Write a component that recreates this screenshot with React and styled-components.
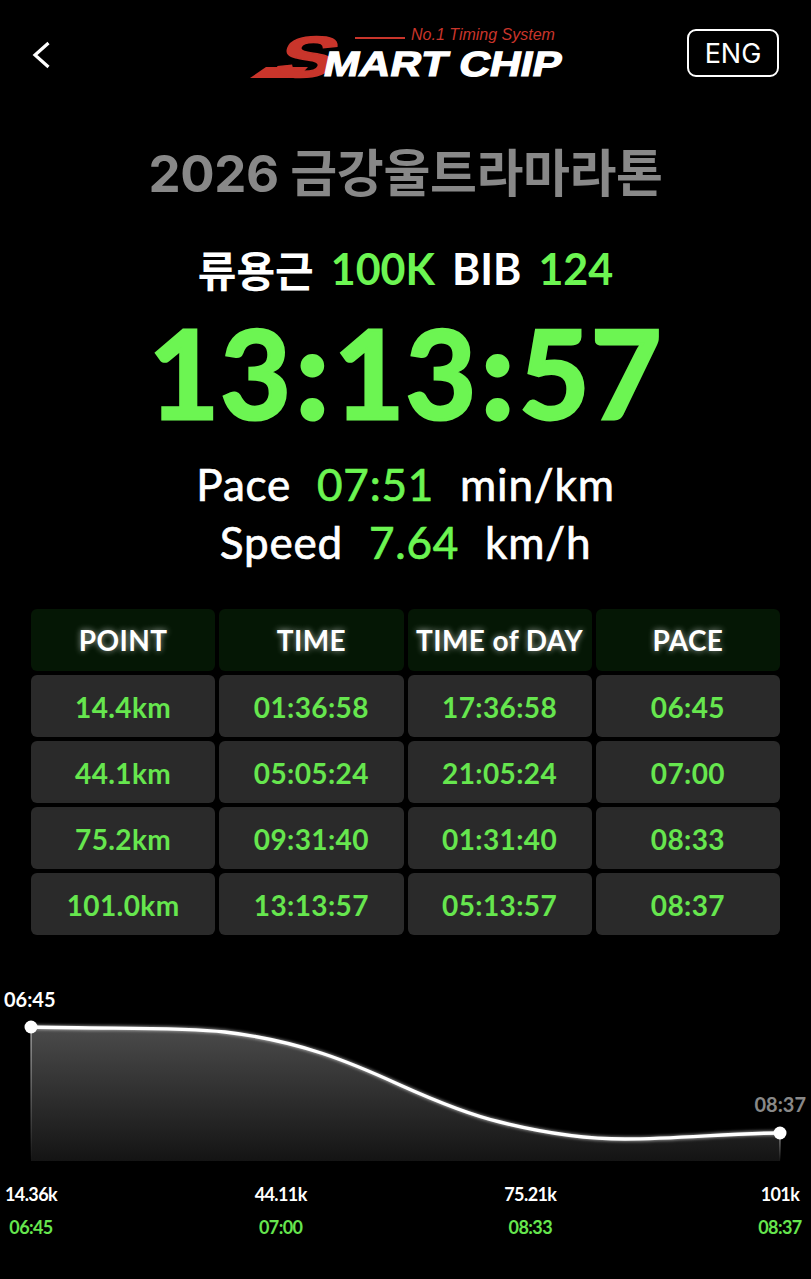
import React from 'react'
import styled, { createGlobalStyle } from 'styled-components'

const GREEN = '#6cf552'
const SOFT_GREEN = '#66e64e'
const KO = '"Lato", "Noto Sans CJK KR", sans-serif'

const GlobalStyle = createGlobalStyle`
  html, body {
    margin: 0;
    background: #000;
  }
  body {
    font-family: ${KO};
    color: #fff;
  }
`

const Page = styled.div`
  width: 811px;
  height: 1279px;
  overflow: hidden;
  background: #000;
`

const Header = styled.header`
  height: 106px;
  padding: 29px 32px 0 32px;
  box-sizing: border-box;
  display: flex;
  justify-content: space-between;
  align-items: flex-start;
`

const BackButton = styled.div`
  width: 19px;
  height: 52px;
  display: flex;
  align-items: center;
`

const LogoWrap = styled.div`
  width: 320px;
  height: 60px;
  margin: -5px 0 0 78px;
`

const LangButton = styled.div`
  width: 92px;
  height: 48px;
  box-sizing: border-box;
  border: 2px solid #fff;
  border-radius: 9px;
  display: flex;
  align-items: center;
  justify-content: center;
  font-family: "Inter", sans-serif;
  font-size: 27px;
  font-weight: 400;
`

const Title = styled.h1`
  margin: 34px 0 0;
  text-align: center;
  color: #888;
  font-family: "Inter", "Noto Sans CJK KR", sans-serif;
  font-size: 51px;
  line-height: 68px;
  font-weight: 700;
  letter-spacing: -0.4px;
`

const NameLine = styled.div`
  margin-top: 35px;
  display: flex;
  justify-content: center;
  gap: 17px;
  font-size: 43px;
  line-height: 52px;
  font-weight: 700;
`

const NameText = styled.span`
  font-family: "Noto Sans CJK KR", sans-serif;
  font-size: 42px;
  font-weight: 700;
`

const Green = styled.span`
  color: ${GREEN};
`

const BigTime = styled.div`
  margin-top: 17px;
  text-align: center;
  color: ${GREEN};
  font-size: 122px;
  line-height: 120px;
  font-weight: 700;
  letter-spacing: 1px;
  -webkit-text-stroke: 3px currentColor;
`

const Colon = styled.span`
  font-family: "Inter", sans-serif;
`

const StatLine = styled.div`
  display: flex;
  justify-content: center;
  gap: 26px;
  font-size: 44px;
  line-height: 58px;
  letter-spacing: 0.8px;
  -webkit-text-stroke: 0.7px currentColor;
  margin-top: ${p => p.$top || 0}px;
`

const Table = styled.div`
  margin: 38px 31px 0;
  display: grid;
  grid-template-columns: repeat(4, 1fr);
  grid-auto-rows: 62px;
  gap: 4px;
`

const Cell = styled.div`
  background: ${p => (p.$head ? '#051705' : '#2a2a2a')};
  color: ${p => (p.$head ? '#fff' : SOFT_GREEN)};
  text-shadow: ${p => (p.$head ? '0 0 6px rgba(255,255,255,0.6)' : 'none')};
  padding-top: ${p => (p.$head ? 0 : 2)}px;
  box-sizing: border-box;
  border-radius: 6px;
  display: flex;
  align-items: center;
  justify-content: center;
  font-size: 28px;
  font-weight: 700;
  letter-spacing: 0.4px;
  white-space: nowrap;
`

const Chart = styled.svg`
  display: block;
  margin-top: 20px;
`

const ChartLabel = styled.text`
  font-family: "Lato", sans-serif;
  font-size: 20px;
  font-weight: 700;
  fill: ${p => p.$fill};
  text-anchor: ${p => p.$anchor};
`

const AxisRow = styled.div`
  margin-top: 17px;
  display: flex;
  justify-content: space-between;
`

const AxisItem = styled.div`
  width: 62px;
  display: flex;
  flex-direction: column;
  align-items: center;
  gap: 12px;
  font-size: 18px;
  line-height: 21px;
  font-weight: 700;
  letter-spacing: -0.6px;
`

const AxisPace = styled.span`
  color: ${SOFT_GREEN};
`

function Logo() {
  return (
    <svg width="320" height="60" viewBox="0 0 320 60" style={{ overflow: 'visible' }}>
      <polygon points="2,54 18,43 60,43 50,54" fill="#c9352b" />
      <text transform="translate(24,53) scale(1.5,1) skewX(-14)" fontFamily="Liberation Sans" fontWeight="700" fontSize="58" fill="#c9352b" stroke="#c9352b" strokeWidth="1.5">S</text>
      <text transform="translate(74,52) scale(1.22,1) skewX(-10)" fontFamily="Liberation Sans" fontWeight="700" fontSize="35" fill="#fff" stroke="#fff" strokeWidth="1.2">MART CHIP</text>
      <rect x="107" y="13" width="50" height="2" fill="#c9352b" />
      <text x="163" y="16" fontFamily="Liberation Sans" fontStyle="italic" fontSize="16" fill="#c9352b">No.1 Timing System</text>
    </svg>
  )
}

const rows = [
  ['14.4km', '01:36:58', '17:36:58', '06:45'],
  ['44.1km', '05:05:24', '21:05:24', '07:00'],
  ['75.2km', '09:31:40', '01:31:40', '08:33'],
  ['101.0km', '13:13:57', '05:13:57', '08:37'],
]

const axis = [
  ['14.36k', '06:45'],
  ['44.11k', '07:00'],
  ['75.21k', '08:33'],
  ['101k', '08:37'],
]

const line = 'M31 72 C120 74 180 72 225 77 C300 86 350 107 400 130 C440 148 470 160 500 167 C540 177 580 184 625 184 C680 184 730 178 780 178'

function PaceChart() {
  return (
    <Chart width="811" height="212" viewBox="0 0 811 212">
      <defs>
        <linearGradient id="area" x1="0" y1="0" x2="0" y2="1">
          <stop offset="0" stopColor="#4b4b4b" />
          <stop offset="1" stopColor="#141414" />
        </linearGradient>
        <linearGradient id="edge" x1="0" y1="0" x2="0" y2="1">
          <stop offset="0" stopColor="#fff" stopOpacity="0.8" />
          <stop offset="1" stopColor="#fff" stopOpacity="0" />
        </linearGradient>
        <filter id="glow" x="-5%" y="-20%" width="110%" height="140%">
          <feGaussianBlur stdDeviation="1.5" />
        </filter>
      </defs>
      <path d={`${line} L780 206 L31 206 Z`} fill="url(#area)" />
      <rect x="30.5" y="72" width="1" height="134" fill="url(#edge)" />
      <rect x="779.5" y="178" width="1" height="28" fill="url(#edge)" />
      <path d={line} fill="none" stroke="#fff" strokeOpacity="0.5" strokeWidth="5" filter="url(#glow)" />
      <path d={line} fill="none" stroke="#fff" strokeWidth="3.4" />
      <circle cx="31" cy="72" r="6.5" fill="#fff" />
      <circle cx="780" cy="178" r="6.5" fill="#fff" />
      <ChartLabel x="4" y="52" $fill="#fff" $anchor="start">06:45</ChartLabel>
      <ChartLabel x="806" y="157" $fill="#888" $anchor="end">08:37</ChartLabel>
    </Chart>
  )
}

export default function App() {
  return (
    <Page>
      <GlobalStyle />
      <Header>
        <BackButton>
          <svg width="19" height="28" viewBox="0 0 19 28">
            <path d="M16.5 2 L3 14 L16.5 26" fill="none" stroke="#fff" strokeWidth="3.2" />
          </svg>
        </BackButton>
        <LogoWrap><Logo /></LogoWrap>
        <LangButton>ENG</LangButton>
      </Header>

      <Title>2026 금강울트라마라톤</Title>

      <NameLine>
        <NameText>류용근</NameText>
        <Green>100K</Green>
        <span>BIB</span>
        <Green>124</Green>
      </NameLine>
      <BigTime>13<Colon>:</Colon>13<Colon>:</Colon>57</BigTime>

      <StatLine $top={20}>
        <span>Pace</span>
        <Green>07:51</Green>
        <span>min/km</span>
      </StatLine>
      <StatLine>
        <span>Speed</span>
        <Green>7.64</Green>
        <span>km/h</span>
      </StatLine>

      <Table>
        {['POINT', 'TIME', 'TIME of DAY', 'PACE'].map(h => (
          <Cell key={h} $head>{h}</Cell>
        ))}
        {rows.map(r => r.map((v, i) => <Cell key={r[0] + i}>{v}</Cell>))}
      </Table>

      <PaceChart />

      <AxisRow>
        {axis.map(a => (
          <AxisItem key={a[0]}>
            <span>{a[0]}</span>
            <AxisPace>{a[1]}</AxisPace>
          </AxisItem>
        ))}
      </AxisRow>
    </Page>
  )
}
